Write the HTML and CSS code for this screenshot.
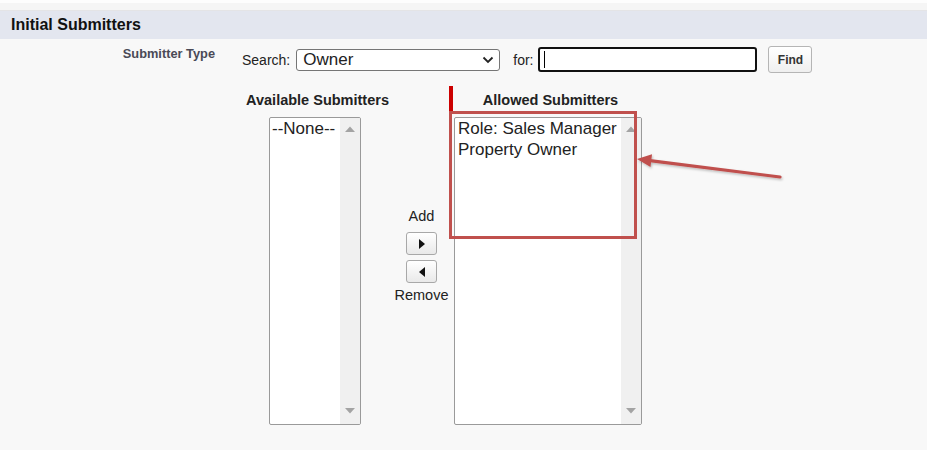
FILE: index.html
```html
<!DOCTYPE html>
<html>
<head>
<meta charset="utf-8">
<link rel="stylesheet" href="styles.css">
</head>
<body>
<div class="topbar"></div>
<div class="section-header">Initial Submitters</div>
<div class="type-row">
  <div class="type-label">Submitter Type</div>
  <div class="search">
    <span class="lbl">Search:</span>
    <div class="select">
      <span>Owner</span>
      <svg class="chev" width="12" height="8" viewBox="0 0 12 8"><path d="M1.5 1.5 L6 6 L10.5 1.5" fill="none" stroke="#222" stroke-width="1.8"/></svg>
    </div>
    <span class="lbl for">for:</span>
    <div class="input"><span class="caret"></span></div>
    <div class="find">Find</div>
  </div>
</div>
<div class="duel">
  <div class="col-head">Available Submitters</div>
  <div></div>
  <div class="col-head required">Allowed Submitters</div>

  <div class="listbox left">
    <div class="options">
      <div class="opt">--None--</div>
    </div>
    <div class="track">
      <svg width="10" height="6" viewBox="0 0 10 6"><path d="M0 6 L5 0.5 L10 6Z" fill="#a3a3a3"/></svg>
      <svg width="10" height="6" viewBox="0 0 10 6"><path d="M0 0 L5 5.5 L10 0Z" fill="#a3a3a3"/></svg>
    </div>
  </div>
  <div class="mover">
    <div class="mv-label">Add</div>
    <div class="mv-btn"><svg width="6" height="10" viewBox="0 0 6 10"><path d="M0 0 L6 5 L0 10Z" fill="#111"/></svg></div>
    <div class="mv-btn second"><svg width="6" height="10" viewBox="0 0 6 10"><path d="M6 0 L0 5 L6 10Z" fill="#111"/></svg></div>
    <div class="mv-label rem">Remove</div>
  </div>
  <div class="listbox right">
    <div class="options">
      <div class="opt">Role: Sales Manager</div>
      <div class="opt">Property Owner</div>
    </div>
    <div class="track">
      <svg width="10" height="6" viewBox="0 0 10 6"><path d="M0 6 L5 0.5 L10 6Z" fill="#a3a3a3"/></svg>
      <svg width="10" height="6" viewBox="0 0 10 6"><path d="M0 0 L5 5.5 L10 0Z" fill="#a3a3a3"/></svg>
    </div>
  </div>
</div>
<svg class="annot" width="927" height="450" viewBox="0 0 927 450">
  <defs>
    <filter id="sh" x="-10%" y="-10%" width="120%" height="130%">
      <feDropShadow dx="1" dy="1.5" stdDeviation="1.2" flood-color="#000" flood-opacity="0.25"/>
    </filter>
  </defs>
  <rect x="450.5" y="112.5" width="185" height="125" fill="none" stroke="#c0504d" stroke-width="3"/>
  <g filter="url(#sh)">
    <line x1="780" y1="177" x2="650" y2="160.7" stroke="#c0504d" stroke-width="3.2" stroke-linecap="round"/>
    <polygon points="637,159 652,154.3 650.5,167" fill="#c0504d"/>
  </g>
</svg>
</body>
</html>
```
FILE: styles.css
```css
body {
  margin: 0;
  background: #f8f8f8;
  font-family: "Liberation Sans", Arial, sans-serif;
  color: #222;
  width: 927px;
  height: 450px;
  overflow: hidden;
  position: relative;
}

.topbar {
  height: 7px;
  background: #f5f5f5;
  border-top: 3px solid #fdfdfd;
  border-bottom: 1px solid #e4e4e6;
}

.section-header {
  height: 28px;
  line-height: 28px;
  background: #e3e6ef;
  padding-left: 11px;
  font-weight: bold;
  font-size: 16px;
  color: #111;
}

.type-row {
  display: flex;
  margin-top: 7px;
  height: 27px;
}

.type-label {
  width: 215px;
  text-align: right;
  font-weight: bold;
  font-size: 12.8px;
  color: #4a4a56;
  line-height: 15px;
}

.search {
  display: flex;
  align-items: center;
  margin-left: 27px;
  height: 27px;
}

.lbl {
  font-size: 14px;
  color: #222;
}

.for {
  margin-left: 13px;
}

.select {
  margin-left: 6px;
  width: 204px;
  height: 22px;
  box-sizing: border-box;
  border: 1px solid #767676;
  border-radius: 3px;
  background: #fff;
  display: flex;
  align-items: center;
  justify-content: space-between;
  padding: 0 5px 0 6px;
  font-size: 17px;
  color: #222;
}

.chev {
  display: block;
}

.input {
  margin-left: 5px;
  width: 219px;
  height: 25px;
  box-sizing: border-box;
  border: 2px solid #111;
  border-radius: 3px;
  background: #fff;
  display: flex;
  align-items: center;
  padding-left: 4px;
}

.caret {
  width: 1px;
  height: 17px;
  background: #000;
}

.find {
  margin-left: 11px;
  width: 44px;
  height: 27px;
  box-sizing: border-box;
  border: 1px solid #b5b5b5;
  border-radius: 3px;
  background: linear-gradient(#ffffff, #efefef);
  font-weight: bold;
  font-size: 12px;
  color: #333;
  display: flex;
  align-items: center;
  justify-content: center;
}

.duel {
  display: grid;
  grid-template-columns: 143px 60px 193px;
  grid-template-rows: 26px 308px;
  row-gap: 5px;
  margin-top: 13px;
  margin-left: 246px;
}

.col-head {
  font-weight: bold;
  font-size: 14.5px;
  line-height: 17px;
  padding-top: 6px;
  color: #222;
  text-align: center;
  box-sizing: border-box;
}

.required {
  border-left: 4px solid #cc0000;
  padding-left: 6px;
}

.listbox {
  display: flex;
  box-sizing: border-box;
  height: 308px;
  border: 1px solid #9a9a9a;
  border-radius: 2px;
  background: #fff;
  overflow: hidden;
}

.listbox.left {
  width: 92px;
  margin-left: 23px;
}

.listbox.right {
  width: 188px;
  margin-left: 5px;
}

.options {
  flex: 1;
}

.left .options {
  padding-left: 2px;
}

.right .options {
  padding-left: 3px;
}

.opt {
  font-size: 17px;
  line-height: 21px;
  color: #222;
  white-space: nowrap;
}

.track {
  width: 20px;
  background: #f0f0f0;
  display: flex;
  flex-direction: column;
  align-items: center;
  justify-content: space-between;
  padding: 8px 0 10px;
}

.track svg {
  display: block;
}

.mover {
  display: flex;
  flex-direction: column;
  align-items: center;
  padding-top: 91px;
  padding-left: 5px;
}

.mv-label {
  font-size: 14.5px;
  line-height: 16px;
  color: #222;
  margin-bottom: 8px;
}

.mv-label.rem {
  margin-top: 4px;
  margin-bottom: 0;
}

.mv-btn {
  width: 31px;
  height: 23px;
  box-sizing: border-box;
  border: 1px solid #a8a8a8;
  border-radius: 3px;
  background: linear-gradient(#ffffff, #e9e9e9);
  display: flex;
  align-items: center;
  justify-content: center;
}

.mv-btn.second {
  margin-top: 5px;
}

.annot {
  position: absolute;
  left: 0;
  top: 0;
  pointer-events: none;
}
```
